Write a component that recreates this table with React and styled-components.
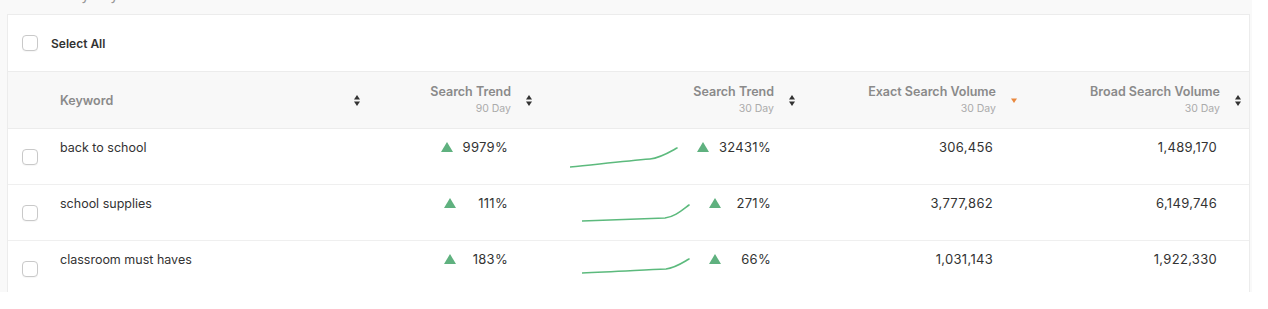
import styled, { createGlobalStyle } from "styled-components";

const GlobalStyle = createGlobalStyle`
body {
  margin: 0;
  background: #ffffff;
  font-family: Inter, "Noto Sans", "Liberation Sans", sans-serif;
}
`;

const Page = styled.div`
width: 1252px;
height: 292px;
background: #f9f9f9;
overflow: hidden;
padding-left: 7px;
box-sizing: border-box;
`;

const Heading = styled.h2`
margin: -14px 0 10px 1px;
font-size: 15px;
line-height: 18px;
font-weight: 700;
color: #333;
display: flex;
gap: 10px;
`;

const HeadingSoft = styled.span`
font-weight: 400;
color: #999;
`;

const Card = styled.div`
width: 1243px;
background: #fff;
border: 1px solid #ececec;
border-bottom: none;
box-sizing: border-box;
`;

const SelectRow = styled.div`
height: 56px;
display: flex;
align-items: center;
gap: 13px;
padding-left: 14px;
`;

const SelectLabel = styled.span`
font-size: 12px;
font-weight: 600;
color: #333;
`;

const Checkbox = styled.span`
display: block;
width: 16px;
height: 16px;
border: 1px solid #c9c9c9;
border-radius: 4px;
background: #fff;
box-sizing: border-box;
box-shadow: 0 1px 1px rgba(0,0,0,0.04);
`;

const columns = "44px 316px 172px 263px 222px 224px";

const HeaderRow = styled.div`
display: grid;
grid-template-columns: ${columns};
height: 58px;
background: #f8f8f8;
border-top: 1px solid #ececec;
border-bottom: 1px solid #ececec;
box-sizing: border-box;
`;

const HeadCell = styled.div`
display: flex;
align-items: center;
justify-content: ${({ $left }) => ($left ? "space-between" : "flex-end")};
gap: 15px;
padding: 0 8px;
`;

const HeadText = styled.div`
display: flex;
flex-direction: column;
align-items: flex-end;
`;

const HeadTitle = styled.span`
font-size: 12.5px;
line-height: 15px;
font-weight: 600;
color: #8a8a8a;
`;

const HeadSub = styled.span`
font-size: 10.5px;
line-height: 15px;
margin-top: 2px;
color: #ababab;
`;

const Row = styled.div`
display: grid;
grid-template-columns: ${columns};
height: 56px;
border-bottom: 1px solid #efefef;
box-sizing: border-box;
`;

const CheckCell = styled.div`
display: flex;
align-items: center;
padding-left: 14px;
`;

const Cell = styled.div`
display: flex;
align-items: flex-start;
justify-content: ${({ $left }) => ($left ? "flex-start" : "flex-end")};
padding: ${({ $left }) => ($left ? "11px" : "10px")} 32px 0 8px;
font-size: ${({ $left }) => ($left ? "12.5px" : "13px")};
line-height: 16px;
color: #333;
letter-spacing: ${({ $left }) => ($left ? "0" : "0.3px")};
`;

const Trend = styled.div`
display: flex;
align-items: center;
gap: 10px;
`;

const Pct = styled.span`
min-width: ${({ $min }) => $min}px;
text-align: right;
`;

const Spark = styled.svg`
display: block;
margin: 7px 19px 0 0;
`;

function SortIcon() {
  return (
    <svg width="6" height="11" viewBox="0 0 6 11">
      <path d="M0 4.5 L3 0 L6 4.5 Z" fill="#333" />
      <path d="M0 6.5 L3 11 L6 6.5 Z" fill="#333" />
    </svg>
  );
}

function SortDesc() {
  return (
    <svg width="6" height="11" viewBox="0 0 6 11">
      <path d="M0 3.5 L6 3.5 L3 8 Z" fill="#e9883e" />
    </svg>
  );
}

function UpTriangle() {
  return (
    <svg width="12" height="10" viewBox="0 0 12 10">
      <path d="M6 0 L12 10 L0 10 Z" fill="#5fb17f" />
    </svg>
  );
}

const rows = [
  {
    keyword: "back to school",
    t90: "9979%",
    t30: "32431%",
    spark: "M0 21 C30 18 55 15 80 13 C90 12 98 7 107 2",
    exact: "306,456",
    broad: "1,489,170",
  },
  {
    keyword: "school supplies",
    t90: "111%",
    t30: "271%",
    spark: "M0 19 C30 18 60 17 83 16 C92 15 99 9 107 3",
    exact: "3,777,862",
    broad: "6,149,746",
  },
  {
    keyword: "classroom must haves",
    t90: "183%",
    t30: "66%",
    spark: "M0 15 C30 14 60 12 84 11 C93 10 100 5 107 1",
    exact: "1,031,143",
    broad: "1,922,330",
  },
];

const headers = [
  { title: "Search Trend", sub: "90 Day" },
  { title: "Search Trend", sub: "30 Day" },
  { title: "Exact Search Volume", sub: "30 Day", desc: true },
  { title: "Broad Search Volume", sub: "30 Day" },
];

export default function App() {
  return (
    <>
      <GlobalStyle />
      <Page>
        <Heading>
          Results <HeadingSoft>by keyword</HeadingSoft>
        </Heading>
        <Card>
          <SelectRow>
            <Checkbox />
            <SelectLabel>Select All</SelectLabel>
          </SelectRow>
          <HeaderRow>
            <div />
            <HeadCell $left>
              <HeadTitle>Keyword</HeadTitle>
              <SortIcon />
            </HeadCell>
            {headers.map((h, i) => (
              <HeadCell key={i}>
                <HeadText>
                  <HeadTitle>{h.title}</HeadTitle>
                  <HeadSub>{h.sub}</HeadSub>
                </HeadText>
                {h.desc ? <SortDesc /> : <SortIcon />}
              </HeadCell>
            ))}
          </HeaderRow>
          {rows.map((r) => (
            <Row key={r.keyword}>
              <CheckCell>
                <Checkbox />
              </CheckCell>
              <Cell $left>{r.keyword}</Cell>
              <Cell>
                <Trend>
                  <UpTriangle />
                  <Pct $min={42}>{r.t90}</Pct>
                </Trend>
              </Cell>
              <Cell>
                <Spark width="108" height="24" viewBox="0 0 108 24">
                  <path d={r.spark} fill="none" stroke="#5cba7d" strokeWidth="1.6" strokeLinecap="round" />
                </Spark>
                <Trend>
                  <UpTriangle />
                  <Pct $min={40}>{r.t30}</Pct>
                </Trend>
              </Cell>
              <Cell>{r.exact}</Cell>
              <Cell>{r.broad}</Cell>
            </Row>
          ))}
        </Card>
      </Page>
    </>
  );
}
